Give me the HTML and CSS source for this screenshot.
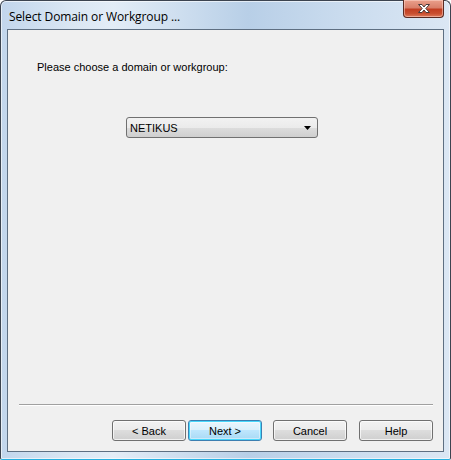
FILE: index.html
```html
<!DOCTYPE html>
<html>
<head>
<meta charset="utf-8">
<link rel="stylesheet" href="styles.css">
</head>
<body>
<div class="window">
  <div class="titlebar">
    <span class="title">Select Domain or Workgroup ...</span>
    <div class="close">
      <svg width="16" height="11" viewBox="0 0 16 11">
        <path d="M2.5 1.5 L6 1.5 L8 4 L10 1.5 L13.5 1.5 L9.8 5.5 L13.5 9.5 L10 9.5 L8 7 L6 9.5 L2.5 9.5 L6.2 5.5 Z" fill="#ffffff" stroke="#4a3a3a" stroke-width="1" stroke-linejoin="round"/>
      </svg>
    </div>
  </div>
  <div class="client">
    <p class="prompt">Please choose a domain or workgroup:</p>
    <div class="combo-row">
      <div class="combo">
        <span class="combo-text">NETIKUS</span>
        <svg class="arrow" width="7" height="4" viewBox="0 0 7 4"><path d="M0 0 H7 L3.5 4 Z" fill="#000"/></svg>
      </div>
    </div>
    <div class="spacer"></div>
    <div class="separator"></div>
    <div class="buttons">
      <button class="btn">&lt; Back</button>
      <button class="btn default">Next &gt;</button>
      <button class="btn cancel">Cancel</button>
      <button class="btn help">Help</button>
    </div>
  </div>
</div>
</body>
</html>
```

FILE: styles.css
```css
* { box-sizing: border-box; }
html, body { margin: 0; padding: 0; background: #ffffff; }
.window {
  width: 451px;
  height: 460px;
  border: 1px solid #3c4450;
  border-bottom-color: #28b0e0;
  border-radius: 6px 6px 2px 2px;
  background: linear-gradient(to right, #c2d6ec 0%, #d9e6f3 15%, #e3edf7 25%, #b8cfe7 55%, #c9dbee 75%, #dbe7f4 100%);
  display: flex;
  flex-direction: column;
  padding: 0 6px 7px 6px;
  box-shadow: inset 0 0 0 1px rgba(255,255,255,0.6);
}
.titlebar {
  height: 28px;
  display: flex;
  align-items: flex-start;
  position: relative;
}
.title {
  font-family: "Open Sans", "Noto Sans", sans-serif;
  font-size: 12px;
  color: #000;
  margin: 7px 0 0 2px;
  letter-spacing: -0.1px;
}
.close {
  position: absolute;
  right: 0;
  top: -1px;
  width: 41px;
  height: 18px;
  border: 1px solid #5a2a22;
  border-top: none;
  border-radius: 0 0 4px 4px;
  background: linear-gradient(to bottom, #eaa08c 0%, #d9806a 45%, #c23e22 55%, #c94f30 80%, #de7a5c 100%);
  box-shadow: inset 0 0 0 1px rgba(255,220,210,0.5);
  display: flex;
  align-items: center;
  justify-content: center;
}
.client {
  flex: 1;
  background: #f0f0f0;
  border: 1px solid #5e6f82;
  display: flex;
  flex-direction: column;
  font-family: "Liberation Sans", Arial, sans-serif;
  font-size: 11px;
  color: #000;
}
.prompt {
  margin: 31px 0 0 29px;
  font-size: 11px;
  line-height: 13px;
}
.combo-row {
  margin-top: 43px;
  padding-left: 118px;
}
.combo {
  width: 192px;
  height: 21px;
  border: 1px solid #707070;
  border-radius: 3px;
  background: linear-gradient(to bottom, #f2f2f2 0%, #ebebeb 50%, #dddddd 50%, #cfcfcf 100%);
  display: flex;
  align-items: center;
  justify-content: space-between;
  padding: 0 6px 0 3px;
}
.combo-text { font-size: 11px; }
.arrow { display: block; }
.spacer { flex: 1; }
.separator {
  margin: 0 10px 0 11px;
  border-top: 1px solid #a0a0a0;
  border-bottom: 1px solid #ffffff;
}
.buttons {
  display: flex;
  justify-content: flex-end;
  padding: 14px 10px 10px 0;
}
.btn {
  width: 74px;
  height: 21px;
  border: 1px solid #707070;
  border-radius: 3px;
  background: linear-gradient(to bottom, #f2f2f2 0%, #ebebeb 50%, #dddddd 50%, #cfcfcf 100%);
  box-shadow: inset 0 0 0 1px rgba(255,255,255,0.7);
  font-family: "Liberation Sans", Arial, sans-serif;
  font-size: 11px;
  color: #000;
  padding: 0;
}
.btn.default { margin-left: 2px; }
.btn.cancel { margin-left: 11px; }
.btn.help { margin-left: 12px; }
.btn.default {
  border-color: #3c7fb1;
  background: linear-gradient(to bottom, #eaf6fd 0%, #d9f0fc 50%, #bee6fd 50%, #a7d9f5 100%);
  box-shadow: inset 0 0 0 1px #48d7fb, inset 0 0 0 2px rgba(255,255,255,0.4);
}
```
